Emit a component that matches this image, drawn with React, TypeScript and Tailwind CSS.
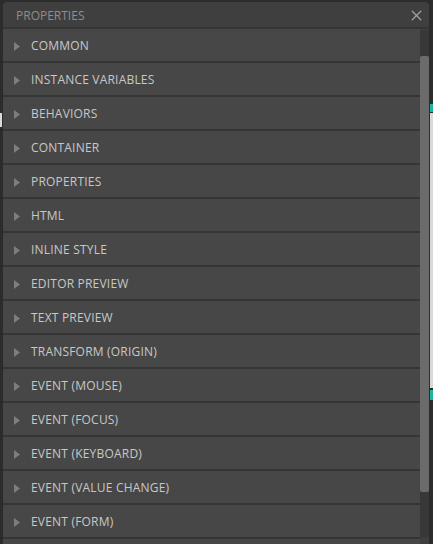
import { X } from "lucide-react";

const sections = [
  "COMMON",
  "INSTANCE VARIABLES",
  "BEHAVIORS",
  "CONTAINER",
  "PROPERTIES",
  "HTML",
  "INLINE STYLE",
  "EDITOR PREVIEW",
  "TEXT PREVIEW",
  "TRANSFORM (ORIGIN)",
  "EVENT (MOUSE)",
  "EVENT (FOCUS)",
  "EVENT (KEYBOARD)",
  "EVENT (VALUE CHANGE)",
  "EVENT (FORM)",
];

function Row({ label }: { label: string }) {
  return (
    <div className="flex h-[32px] shrink-0 items-center bg-[#474747] pt-[2px]">
      <svg width="6" height="9" viewBox="0 0 6 9" className="ml-[11px] mr-[11px] shrink-0">
        <path d="M0 0 L6 4.5 L0 9 Z" fill="#7e7e7e" />
      </svg>
      <span className="text-[12px] text-[#c8c8c8] tracking-[0.2px]">{label}</span>
    </div>
  );
}

export default function App() {
  return (
    <div
      className="relative h-[544px] w-[433px] overflow-hidden bg-[#2c2c2c]"
      style={{ fontFamily: '"Open Sans", "Noto Sans", sans-serif' }}
    >
      {/* editor canvas peeking out behind the panel */}
      <div className="absolute left-[430px] top-[104px] h-[8px] w-[3px] bg-[#1fb5a0]" />
      <div className="absolute left-[430px] top-[113px] h-[275px] w-[3px] bg-[#d9d9d9]" />
      <div className="absolute left-[430px] top-[390px] h-[10px] w-[3px] bg-[#1fb5a0]" />
      <div className="absolute left-0 top-[113px] h-[14px] w-[2px] bg-[#d9d9d9]" />

      {/* properties panel */}
      <div className="absolute left-[3px] top-[2px] flex h-[560px] w-[426px] flex-col overflow-hidden rounded-t-[4px] bg-[#353535]">
        <div className="flex h-[25px] shrink-0 items-center justify-between bg-[#3f3f3f] pl-[13px] pr-[4px] pt-[2px]">
          <span className="text-[12px] text-[#8e8e8e]">PROPERTIES</span>
          <X size={17} strokeWidth={1.8} color="#a2a2a2" />
        </div>
        <div className="mt-[2px] flex min-h-0 flex-1">
          <div className="flex flex-1 flex-col gap-[2px] overflow-hidden">
            {sections.map((s) => (
              <Row key={s} label={s} />
            ))}
            <div className="h-[32px] shrink-0 bg-[#474747]" />
          </div>
          <div className="w-[9px] shrink-0 bg-[#3f3f3f] pt-[1px]">
            <div className="h-[507px] rounded-[2px] bg-[#383838] pt-[26px]">
              <div className="h-[436px] rounded-[2px] bg-[#6b6b6b]" />
            </div>
          </div>
        </div>
      </div>
    </div>
  );
}
